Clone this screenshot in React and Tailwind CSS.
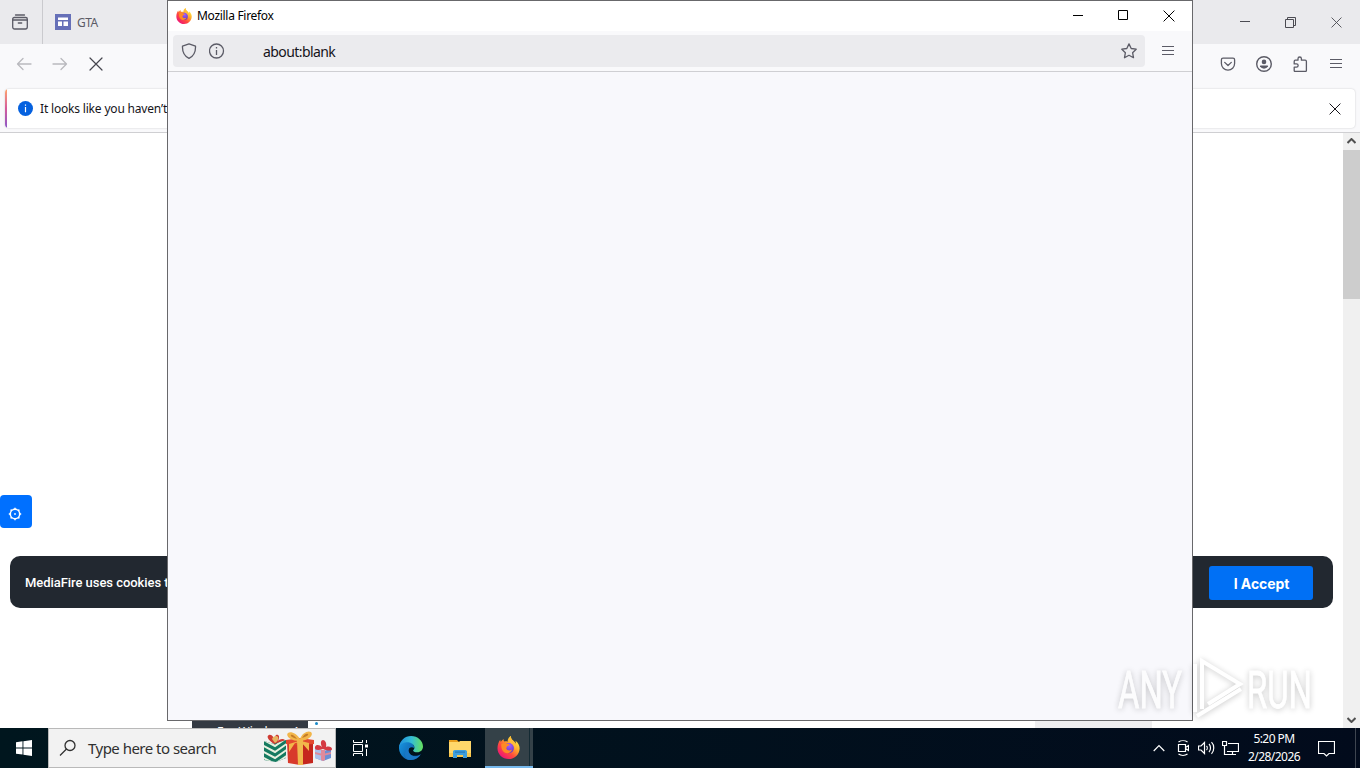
import React from "react";

const Icon = ({ className = "w-4 h-4", viewBox = "0 0 16 16", children, ...props }) => (
  <svg className={`shrink-0 ${className}`} viewBox={viewBox} fill="none" stroke="currentColor" {...props}>
    {children}
  </svg>
);

const CloseIcon = ({ className }) => (
  <Icon className={className} viewBox="0 0 12 12">
    <path d="M.6.6l10.8 10.8M11.4.6L.6 11.4" />
  </Icon>
);

const MenuIcon = () => (
  <Icon className="w-3 h-3" viewBox="0 0 12 12" strokeLinecap="round" strokeWidth="1.200">
    <path d="M.5 1.500h11M.5 5.500h11M.5 9.500h11" />
  </Icon>
);

const FirefoxLogo = ({ id, className }) => (
  <svg className={`shrink-0 ${className}`} viewBox="0 0 24 24">
    <defs>
      <linearGradient id={`${id}-body`} x1="20" y1="3" x2="4" y2="21" gradientUnits="userSpaceOnUse">
        <stop offset="0" stopColor="#fff044" />
        <stop offset=".35" stopColor="#ffa32b" />
        <stop offset=".65" stopColor="#ff4a3e" />
        <stop offset="1" stopColor="#ef1674" />
      </linearGradient>
      <radialGradient id={`${id}-globe`} cx=".55" cy=".25" r=".8">
        <stop offset="0" stopColor="#a45cff" />
        <stop offset="1" stopColor="#5b36bd" />
      </radialGradient>
    </defs>
    <path
      fill={`url(#${id}-body)`}
      d="M14.6 0c-.3 2.6 1 3.7 2.7 5.2 1 .9 1.8 1.9 2.2 3 .2-1.3.1-2.2-.3-3.3 3 2 4.5 5.200 4.400 8.300C23.400 19.200 18.500 24 12.200 24 5.700 24 .5 19 .5 12.700c0-3.400 1-6.500 2.900-8.900.1.900.2 1.500.6 2.200C4.800 4.800 5.900 3.700 7 3c-.2 1.100 0 2 .5 2.700 1.300-.3 2.500-.2 3.600.2-.1-2.400 1.200-4.800 3.500-5.900z"
    />
    <circle cx="12.400" cy="12.600" r="5.300" fill={`url(#${id}-globe)`} />
    <path
      fill="#ff8a24"
      d="M4.600 8.400c1.800-1.200 3.700-1.400 5.300-.7 1.500.1 2.700.5 3.300 1.300-.4 1.100-1.700 1.200-2.600 1.700-.6.500-.3 1.400-1 2 .700 2.400 3.700 3 6.300 1.500-1.300 3.400-5 4.700-8 2.900C5.200 15.600 4 12 4.600 8.400z"
    />
    <path fill="#ffbd38" d="M14.600 0c-.3 2.600 1 3.700 2.700 5.200 2.500 2.300 3.200 5.600 1.500 9.300.2-3.200-1.400-5.300-4-6.900-2.900-1.800-2.600-6.200-.2-7.600z" />
  </svg>
);

const EdgeLogo = () => (
  <svg className="w-6 h-6" viewBox="0 0 24 24">
    <defs>
      <linearGradient id="edge-top" x1="2" y1="8" x2="23" y2="9" gradientUnits="userSpaceOnUse">
        <stop offset="0" stopColor="#2295dc" />
        <stop offset=".5" stopColor="#35bed5" />
        <stop offset="1" stopColor="#62de66" />
      </linearGradient>
      <linearGradient id="edge-low" x1="1" y1="12" x2="19" y2="23" gradientUnits="userSpaceOnUse">
        <stop offset="0" stopColor="#168ad5" />
        <stop offset="1" stopColor="#0c4d9a" />
      </linearGradient>
    </defs>
    <path fill="url(#edge-low)" d="M0 11C1 5 7 4 11 6c3 1.400 4.500 4 4 6-3-2-7 1-5.600 4.200 1.700 4 7.600 4.700 12.300 2C18.500 24.200 10 26 4.600 21.400 1.300 18.600-.2 15 0 11z" />
    <path fill="url(#edge-top)" d="M.1 11.400C.600 4.800 5.800 0 12.100 0 18.700 0 24 5 24 10.500c0 3.400-2.500 5.800-5.600 5.800-2.700 0-4.600-1-4.300-1.800.3-.9 1.500-1.400 1.300-3.300C15 7.600 10.800 6 7.400 6.200 4 6.400 1.300 8.500.1 11.400z" />
    <path fill="#1a78c5" d="M8 23.300C4.500 20 5.500 13.500 10.700 11c-3 4 .4 9.700 6.500 9.300 1.700-.1 3.200-.9 4.500-2C19 23 13 25.200 8 23.300z" />
  </svg>
);

const ExplorerLogo = () => (
  <svg className="w-[22px] h-[19px]" viewBox="0 0 22 19">
    <path fill="#e99e1c" d="M0 1h8l2 2v2H0z" />
    <path fill="#ffd76a" d="M0 3h10l1-1h11v15H0z" />
    <path fill="#f9c64a" d="M0 14h22v4H0z" />
    <path fill="#3f9edb" d="M4 19v-7l1.500-1h11l1.500 1v7h-4v-3H8v3z" />
    <path fill="#2276b9" d="M6 12.500h10v1.200H6z" />
  </svg>
);

const GiftsArt = () => (
  <svg className="w-[70px] h-[36px]" viewBox="0 0 70 36">
    <defs>
      <clipPath id="green-box">
        <path d="M2 10l10 3 12-4v18l-10 4-12-2z" />
      </clipPath>
    </defs>
    <path fill="#cf3b32" d="M12 13C6 9 4 5 7 4s5 3 6 6c-1-5 1-7 3-6s1 5-1 7c2-3 6-4 8-2s-4 4-9 4z" />
    <path fill="#e6b562" d="M10 8c1-3 5-4 6-2s-1 5-3 6z" />
    <g clipPath="url(#green-box)">
      <path fill="#157a60" d="M0 6h25v28H0z" />
      <path stroke="#e8f0df" strokeWidth="2" fill="none" d="M0 8l13 7 13-9M0 14l13 7 13-9M0 20l13 7 13-9M0 26l13 7 13-9" />
    </g>
    <path fill="#d83a2b" d="M25 11l13 1v22l-12-2z" />
    <path fill="#c5261e" d="M38 12l13-1v21l-13 2z" />
    <path fill="#e3492f" d="M24 9l14-2 14 2v4l-14 1-14-1z" />
    <path fill="#f0b84e" d="M35 9h6v25h-5z" />
    <path fill="#f2b64a" d="M37 10C29 10 23 5 26 2c3-2 9 1 12 6 2-6 8-9 11-7 3 3-2 8-10 9l8 2v8l-8-9-6 1-6 9v-8z" />
    <path fill="#c57c27" d="M35 8c-4-1-7-3-6-4s4 1 6 4zM40 7c2-4 5-5 6-4s-2 3-6 4z" />
    <path fill="#6b8fd4" d="M53 18l8 2 8-2v9l-8 3-8-3z" />
    <path fill="#a9c1ee" d="M53 18l8 2v10l-8-3z" />
    <path fill="#e08a9b" d="M59 19h4v10l-2 1-2-1zM53 21l8 2 8-2v2l-8 2-8-2z" />
    <path fill="#d53a43" d="M61 18c-5 2-9 1-8-2s5-2 7 0c-2-4-1-7 1-7s4 3 3 7c3-1 6 0 6 2s-4 2-9 0z" />
  </svg>
);

const TopBar = () => (
  <div className="flex h-11 bg-[#eaeaed] text-[#5b5b66]">
    <div className="flex w-[43px] items-center justify-center border-r border-[#cacace] pr-0.5">
      <Icon className="w-4 h-4" strokeWidth="1.300" strokeLinecap="round">
        <path d="M3.500 1h9M.7 6h14.600M6.300 9h3.400" />
        <path d="M2.300 3.500h11.400c1 0 1.600.6 1.600 1.600v8c0 1.200-.8 1.900-1.900 1.900H2.600C1.500 15 .7 14.300.7 13.100v-8c0-1 .6-1.600 1.600-1.600z" />
      </Icon>
    </div>
    <div className="flex flex-1 items-center pl-3">
      <svg className="w-4 h-4" viewBox="0 0 16 16">
        <path fill="#6670b8" d="M0 0h16v16H0z" />
        <path fill="#fff" d="M3 3.500h10V6H3zM3 7.500h4V12H3zM8.500 7.500H13V12H8.500z" />
      </svg>
      <span className="ml-1.5 pt-0.5 text-[12px] leading-4 tracking-[-0.5px]">GTA</span>
    </div>
    <div className="flex items-center gap-[35px] pr-[18px] text-[#4b4b52]">
      <Icon className="w-[10px] h-[10px]" viewBox="0 0 10 10"><path d="M0 4.500h10" /></Icon>
      <Icon className="w-[11px] h-[11px]" viewBox="0 0 11 11"><path d="M.5 2.500h8v8h-8zM2.500 2.500v-2h8v8h-2" /></Icon>
      <CloseIcon className="w-[11px] h-[11px]" />
    </div>
  </div>
);

const Toolbar = () => (
  <div className="flex h-[40px] items-center justify-between bg-[#f9f9fb] pl-4 pr-[18px] text-[#5b5b66]">
    <div className="flex items-center gap-5">
      <Icon className="w-4 h-4 text-[#b9b9be]" strokeWidth="1.300" strokeLinecap="round" strokeLinejoin="round">
        <path d="M15 8H1.500M7 2.500L1.500 8 7 13.500" />
      </Icon>
      <Icon className="w-4 h-4 text-[#b9b9be]" strokeWidth="1.300" strokeLinecap="round" strokeLinejoin="round">
        <path d="M1 8h13.500M9 2.500L14.500 8 9 13.500" />
      </Icon>
      <Icon className="w-4 h-4 text-[#45454e]" strokeWidth="1.200" strokeLinecap="round">
        <path d="M2 2l12 12M14 2L2 14" />
      </Icon>
    </div>
    <div className="flex items-center gap-5">
      <Icon className="w-4 h-4" strokeWidth="1.300" strokeLinecap="round" strokeLinejoin="round">
        <path d="M3 2.200h10c1 0 1.600.6 1.600 1.600V7.500a6.600 6.600 0 0 1-13.200 0V3.800c0-1 .6-1.600 1.600-1.600zM4.700 6.400L8 9.500l3.300-3.100" />
      </Icon>
      <Icon className="w-4 h-4" strokeWidth="1.400">
        <circle cx="8" cy="8" r="7.300" />
        <circle cx="8" cy="5.900" r="2.300" fill="currentColor" stroke="none" />
        <path fill="currentColor" stroke="none" d="M4.600 9.500h6.800c.6 0 .9.400.6 1a4.800 4.800 0 0 1-8 0c-.3-.6 0-1 .6-1z" />
      </Icon>
      <Icon className="w-4 h-4" strokeWidth="1.300" strokeLinejoin="round">
        <path d="M6 4.200V2.700a1.700 1.700 0 0 1 3.400 0v1.500h3.800c.8 0 1.200.4 1.200 1.200v9c0 .7-.4 1.100-1.200 1.100H3.300c-.7 0-1.100-.4-1.100-1.100v-3.200h2.300a1.600 1.600 0 0 0 0-3.300H2.200V5.400c0-.8.4-1.200 1.100-1.200z" />
      </Icon>
      <div className="pl-0.5"><MenuIcon /></div>
    </div>
  </div>
);

const Notice = () => (
  <div className="h-[49px] border-b border-[#cfcfd2] bg-[#f9f9fb] px-[5px] pt-[5px]">
    <div className="flex h-[39px] overflow-hidden rounded-[4px] bg-white shadow-[0_0_2px_#0003]">
      <div className="w-[2px] bg-linear-to-b from-[#ffa366] via-[#d55a9b] to-[#8b54c7]" />
      <div className="flex flex-1 items-center justify-between pl-[11px] pr-[14px] text-[#15141a]">
        <div className="flex items-center">
          <svg className="w-[15px] h-[15px]" viewBox="0 0 15 15">
            <circle cx="7.500" cy="7.500" r="7.500" fill="#0561df" />
            <path fill="#fff" d="M6.900 3.500h1.200v1.200H6.900zM6.900 6h1.200v5.300H6.900z" />
          </svg>
          <span className="ml-[7px] pt-px text-[12px] whitespace-nowrap tracking-[-0.18px]">It looks like you haven’t</span>
        </div>
        <CloseIcon className="w-[12px] h-[12px]" />
      </div>
    </div>
  </div>
);

const Scrollbar = () => (
  <div className="flex w-[17px] flex-col items-center bg-[#f0f0f0] text-[#505050]">
    <div className="flex h-[17px] items-center pb-0.5">
      <Icon className="w-[9px] h-[6px]" viewBox="0 0 9 6" strokeWidth="2"><path d="M.5 5l4-4 4 4" /></Icon>
    </div>
    <div className="h-[149px] w-full bg-[#cdcdcd]" />
    <div className="mt-auto flex h-[17px] items-center">
      <Icon className="w-[9px] h-[6px]" viewBox="0 0 9 6" strokeWidth="2"><path d="M.5 1l4 4 4-4" /></Icon>
    </div>
  </div>
);

const PageContent = () => (
  <div className="flex min-h-0 flex-1 bg-white">
    <div className="flex flex-1 flex-col">
      <div className="mt-[362px] flex h-[33px] w-8 items-center justify-center rounded-[4px] bg-[#0070ff] pt-1 pr-0.5 text-white">
        <Icon className="w-[14px] h-[14px]" viewBox="0 0 14 14" strokeWidth="1.500">
          <circle cx="7" cy="7" r="4.700" />
          <circle cx="7" cy="7" r=".9" fill="currentColor" stroke="none" />
          <path d="M7 .8v1.500M7 11.700v1.500M.8 7h1.500M11.700 7h1.500M2.600 2.600l1.200 1.200M10.200 10.200l1.200 1.200M2.600 11.400l1.200-1.200M10.200 3.800l1.200-1.200" />
        </Icon>
      </div>
      <div className="mt-[28px] mr-[10px] ml-[10px] flex h-[52px] items-center justify-between rounded-[10px] bg-[#222830] pt-0.5 pr-5 pl-[15px] text-white">
        <span className="font-['Roboto'] text-[13px] font-medium whitespace-nowrap tracking-[-0.05px]">MediaFire uses cookies to</span>
        <button className="h-[34px] w-[104px] rounded-[3px] bg-[#0070f5] pl-px font-['Inter'] text-[14px] font-bold tracking-[-0.1px]">I Accept</button>
      </div>
      <div className="mt-auto flex h-2 overflow-hidden pl-[192px]">
        <div className="h-2 w-[116px] overflow-hidden bg-[#343a43] pl-[25px] text-[12px] leading-[15px] whitespace-nowrap text-white">
          <div className="pt-1">For Windows 1</div>
        </div>
        <div className="mt-[2px] ml-[7px] h-[3px] w-[3px] rounded-full bg-[#1689c9]" />
        <div className="ml-[717px] w-[117px] bg-[#eeeef0]" />
      </div>
    </div>
    <Scrollbar />
  </div>
);

const PopupWindow = () => (
  <div className="absolute top-0 left-[167px] flex h-[721px] w-[1026px] flex-col border border-[#68686b] bg-[#f8f8fc]">
    <div className="flex h-[30px] items-center bg-white pl-2 pr-[17px] text-black">
      <FirefoxLogo id="title-fox" className="w-4 h-4" />
      <span className="ml-[5px] text-[12px] tracking-[-0.3px]">Mozilla Firefox</span>
      <div className="ml-auto flex items-center gap-[34px]">
        <Icon className="w-[11px] h-[11px]" viewBox="0 0 11 11"><path d="M0 4.500h10" /></Icon>
        <Icon className="mb-px w-[11px] h-[11px]" viewBox="0 0 11 11"><path d="M.5.5h9v9h-9z" /></Icon>
        <CloseIcon className="mb-px w-[12px] h-[12px]" />
      </div>
    </div>
    <div className="flex h-[41px] items-center border-b border-[#cfcfd3] bg-[#f9f9fb] pl-[5px] pr-[18px] text-[#5b5b66]">
      <div className="flex h-8 flex-1 items-center rounded-[4px] bg-[#ebebee] px-2">
        <Icon className="w-4 h-4" strokeWidth="1.300" strokeLinejoin="round">
          <path d="M8 .8l6.500 2.300c.3 5.800-1.900 9.900-6.500 12.200C3.400 13 1.200 8.900 1.500 3.100z" />
        </Icon>
        <Icon className="ml-3 w-4 h-4" strokeWidth="1.300">
          <circle cx="7.500" cy="8" r="7" />
          <path d="M7.500 7v5M7.500 4v1.500" />
        </Icon>
        <span className="ml-[38px] text-[14px] tracking-[-0.58px] text-[#15141a]">about:blank</span>
        <Icon className="ml-auto w-4 h-4" strokeWidth="1.300" strokeLinejoin="round">
          <path d="M8 .9l2.200 4.600 5 .7-3.600 3.500.9 5L8 12.300l-4.500 2.400.9-5L.8 6.200l5-.7z" />
        </Icon>
      </div>
      <div className="ml-[17px]"><MenuIcon /></div>
    </div>
  </div>
);

const Watermark = () => (
  <svg
    className="absolute top-[648px] left-[1110px] h-[80px] w-[220px] opacity-65 drop-shadow-[0_1px_3px_#00000055]"
    viewBox="0 0 220 80"
    fill="none"
    stroke="#fff"
  >
    <g fill="#fff" strokeWidth="0.800" fontFamily="Roboto" fontSize="52">
      <text x="8" y="60" textLength="64" lengthAdjust="spacingAndGlyphs">ANY</text>
      <text x="137" y="60" textLength="65" lengthAdjust="spacingAndGlyphs">RUN</text>
    </g>
    <path strokeWidth="4" d="M85 16v48M92 61V13l38 23-32 20M87 68l44-27" />
  </svg>
);

const Taskbar = () => (
  <div className="flex h-10 items-stretch bg-linear-to-r from-[#00161e] to-[#020b1c] text-white">
    <div className="flex w-12 items-center justify-center">
      <svg className="w-4 h-4" viewBox="0 0 16 16">
        <path fill="#fff" d="M0 2.200L6.500 1.300v6.200H0zM7.400 1.200L16 0v7.500H7.400zM0 8.400h6.500v6.200L0 13.700zM7.400 8.400H16V16l-8.600-1.200z" />
      </svg>
    </div>
    <div className="flex w-[288px] items-center border border-[#b9b9b9] bg-[#f2f2f2] pl-[10px] text-[#303030]">
      <Icon className="w-[18px] h-[18px]" viewBox="0 0 18 18" strokeWidth="1.300">
        <circle cx="11" cy="6.500" r="5" />
        <path d="M7.500 10L1 16.500" />
      </Icon>
      <span className="ml-[11px] text-[15px] whitespace-nowrap tracking-[-0.52px]">Type here to search</span>
      <div className="mt-0.5 ml-auto mr-[3px]"><GiftsArt /></div>
    </div>
    <div className="flex w-12 items-center justify-center">
      <Icon className="w-[17px] h-[16px]" viewBox="0 0 17 16">
        <path d="M1.500 4.500h9v7h-9zM1.500 0v2.500h9V0M1.500 16v-2.500h9V16M14.500 0v3M14.500 9v7" />
        <path fill="currentColor" stroke="none" d="M13 4.500h3v3h-3z" />
      </Icon>
    </div>
    <div className="flex w-[54px] items-center justify-center"><EdgeLogo /></div>
    <div className="flex w-[44px] items-center justify-center"><ExplorerLogo /></div>
    <div className="ml-[3px] flex w-12 border-b-2 border-[#76b9ed] bg-[#344148]">
      <div className="mr-[3px] flex flex-1 items-center justify-center border-r border-[#142a33] pl-0.5">
        <FirefoxLogo id="task-fox" className="w-[23px] h-[23px]" />
      </div>
    </div>
    <div className="ml-auto flex items-center pr-1">
      <Icon className="w-3 h-3" viewBox="0 0 12 12" strokeWidth="1.200"><path d="M.7 9L6 3.500 11.300 9" /></Icon>
      <Icon className="ml-[12px] w-[12px] h-4" viewBox="0 0 12 16" strokeWidth="1.200">
        <path d="M1.500 4.500h7v7h-7zM8.500 7.500l3-2v5l-3-2M1.500 2C4 .3 8 .3 10.500 2M1.500 14c2.500 1.700 6.500 1.700 9 0" />
      </Icon>
      <Icon className="ml-[9px] w-[17px] h-[14px]" viewBox="0 0 17 14" strokeWidth="1.200">
        <path d="M.5 5h2.500l3.500-3.500v11L3 9H.5zM8.500 5c1 1 1 3 0 4M11 3c2 2 2 6 0 8M13.500 1.200c3 3 3 8.600 0 11.600" />
      </Icon>
      <Icon className="ml-[7px] w-[17px] h-[14px]" viewBox="0 0 17 14" strokeWidth="1.200">
        <path d="M.5.5h4v4h-4zM6 2.500h10.500v8H5M2.500 4.500v9H7M10.500 10.500v3M7 13.500h7" />
      </Icon>
      <div className="ml-[8px] w-[54px] pb-px text-center text-[12px] leading-[18px] whitespace-nowrap tracking-[-0.55px]">
        <div>5:20 PM</div>
        <div>2/28/2026</div>
      </div>
      <Icon className="ml-[17px] w-[17px] h-[17px]" viewBox="0 0 17 17" strokeWidth="1.200">
        <path d="M.5 1.500h16v12H11l-2.500 2.500L6 13.500H.5z" />
      </Icon>
      <div className="ml-[20px] h-10 w-px bg-[#3e4550]" />
    </div>
  </div>
);

const App = () => {
  return (
    <div className="relative flex h-[768px] w-[1360px] flex-col overflow-hidden bg-white font-['Noto_Sans','Open_Sans',sans-serif]">
      <TopBar />
      <Toolbar />
      <Notice />
      <PageContent />
      <Taskbar />
      <PopupWindow />
      <Watermark />
    </div>
  );
};

export default App;
